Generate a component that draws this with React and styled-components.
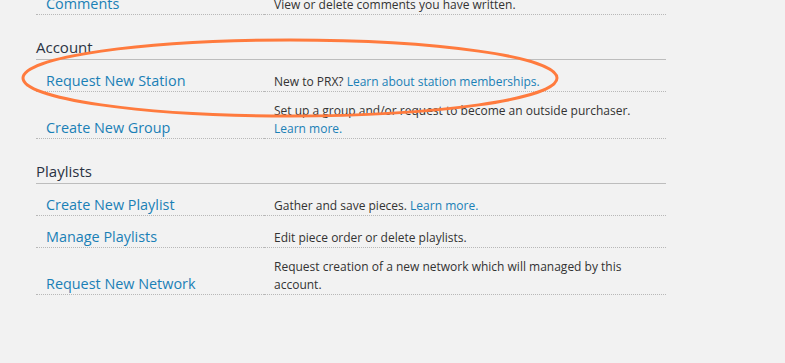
import React from "react";
import styled, { createGlobalStyle } from "styled-components";

const sections = [
  {
    rows: [
      { link: "Comments", text: "View or delete comments you have written." },
    ],
  },
  {
    title: "Account",
    rows: [
      {
        link: "Request New Station",
        text: "New to PRX? ",
        more: "Learn about station memberships.",
      },
      {
        link: "Create New Group",
        text: "Set up a group and/or request to become an outside purchaser. ",
        more: "Learn more.",
      },
    ],
  },
  {
    title: "Playlists",
    rows: [
      {
        link: "Create New Playlist",
        text: "Gather and save pieces. ",
        more: "Learn more.",
      },
      { link: "Manage Playlists", text: "Edit piece order or delete playlists." },
      {
        link: "Request New Network",
        text: "Request creation of a new network which will managed by this account.",
      },
    ],
  },
];

function App() {
  return (
    <Page>
      <GlobalStyle />
      <Content>
        {sections.map((section, i) => (
          <Section key={i}>
            {section.title && <Heading>{section.title}</Heading>}
            <Table>
              <tbody>
                {section.rows.map((row) => (
                  <tr key={row.link}>
                    <LinkCell>
                      <a href="#">{row.link}</a>
                    </LinkCell>
                    <TextCell>
                      {row.text}
                      {row.more && <a href="#">{row.more}</a>}
                    </TextCell>
                  </tr>
                ))}
              </tbody>
            </Table>
          </Section>
        ))}
      </Content>
      <Annotation viewBox="0 0 785 363">
        <ellipse cx="290" cy="78" rx="267" ry="38" />
      </Annotation>
    </Page>
  );
}

export default App;

const GlobalStyle = createGlobalStyle`
  html, body {
    margin: 0;
    padding: 0;
    background: #f2f2f2;
  }
  body {
    font-family: "Open Sans", "DejaVu Sans", sans-serif;
    color: #333;
  }
  a {
    color: #1a80b6;
    text-decoration: none;
  }
`;

const Page = styled.div`
  position: relative;
  width: 785px;
  height: 363px;
  overflow: hidden;
`;

const Content = styled.div`
  width: 630px;
  margin: -17px 0 0 36px;
`;

const Section = styled.div`
  & + & {
    margin-top: 21px;
  }
`;

const Heading = styled.h3`
  margin: 0;
  padding: 0 0 1px;
  font-size: 15px;
  line-height: 22px;
  font-weight: 400;
  color: #2a3242;
  border-bottom: 1px solid #bdbdbd;
`;

const Table = styled.table`
  width: 100%;
  border-collapse: separate;
  border-spacing: 0;
  table-layout: fixed;

  td {
    padding: 10px 10px 0;
    vertical-align: bottom;
    border-bottom: 1px dotted #b8b8b8;
  }
`;

const LinkCell = styled.td`
  width: 208px;
  font-size: 14.4px;
  line-height: 21px;
`;

const TextCell = styled.td`
  font-size: 12px;
  line-height: 18px;
  color: #333;
`;

const Annotation = styled.svg`
  position: absolute;
  left: 0;
  top: 0;
  width: 785px;
  height: 363px;
  pointer-events: none;

  ellipse {
    fill: none;
    stroke: #ff7b3e;
    stroke-width: 3;
  }
`;
